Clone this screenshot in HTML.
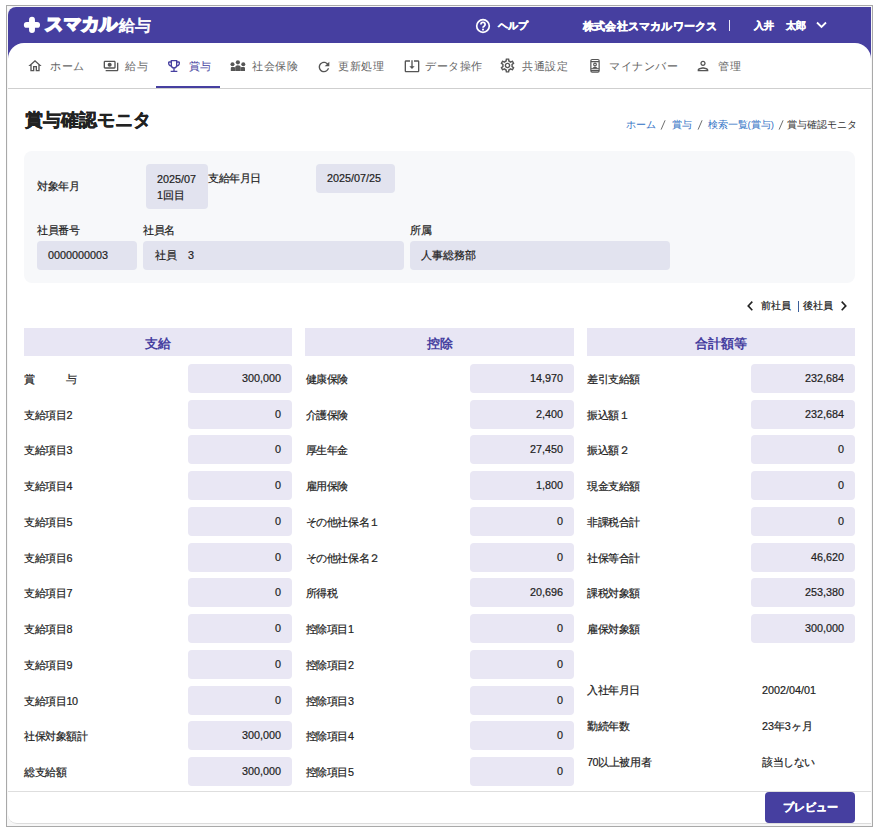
<!DOCTYPE html>
<html lang="ja">
<head>
<meta charset="utf-8">
<style>
*{box-sizing:border-box;margin:0;padding:0}
html,body{width:880px;height:833px;overflow:hidden;background:#fff}
body{font-family:"Liberation Sans",sans-serif;color:#222;position:relative}
.a{position:absolute;white-space:nowrap}
#frame{position:absolute;left:6px;top:5px;width:867px;height:822px;border:1px solid #a9a9a9;background:#f7f7f7}
#app{position:absolute;left:8px;top:7px;width:863px;height:817px;background:#fff;border-top-left-radius:8px;border-bottom-left-radius:9px;overflow:hidden;border-bottom:1px solid #dcdcdc}
#hdr{position:absolute;left:0;top:0;width:863px;height:60px;background:#463fa0}
#nav{position:absolute;left:0;top:36px;width:863px;height:60px;background:#fff;border-top-left-radius:16px;border-top-right-radius:16px}
#navline{position:absolute;left:0;top:81px;width:863px;height:1px;background:#cfcfcf}
.hw{color:#fff;font-weight:bold;font-size:11.2px;line-height:14px;-webkit-text-stroke:0.35px #fff}
.logo{font-size:18px;line-height:24px;font-weight:bold;color:#fff;transform:skewX(-4deg);-webkit-text-stroke:1.7px #fff;letter-spacing:0px}
.ni{color:#666;font-size:11.2px;line-height:14px;letter-spacing:0.5px}
.ic{position:absolute}

.ttl{left:25px;top:107.6px;font-size:17.6px;line-height:24px;font-weight:bold;color:#222;-webkit-text-stroke:0.4px #222}
.bc{font-size:9.6px;line-height:14px;color:#333}
.bc.lk{color:#2e6fc4}
.bc.sl{color:#555}
#panel{left:24px;top:150.8px;width:831px;height:131.9px;background:#f7f8fa;border-radius:8px}
.lb{font-size:10.8px;line-height:14px;color:#222;letter-spacing:-0.4px;-webkit-text-stroke:0.2px #222}
.box{background:#e2e3ef;border-radius:4px}
.vt{font-size:10.8px;line-height:14px;color:#222;-webkit-text-stroke:0.2px #222}
.pn{font-size:10.4px;line-height:14px;color:#222;-webkit-text-stroke:0.2px #222}
.sh{height:28px;background:#e8e6f4;color:#463fa0;font-weight:bold;font-size:12.8px;line-height:31px;text-align:center}
.inp{width:104px;height:29px;background:#e9e7f4;border-radius:4px;font-size:10.8px;line-height:29px;text-align:right;padding-right:11px;color:#222;-webkit-text-stroke:0.2px #222}
.btn{left:765px;top:792px;width:90px;height:31px;background:#463fa0;border-radius:4px;color:#fff;font-weight:bold;font-size:11.2px;line-height:31px;text-align:center;-webkit-text-stroke:0.3px #fff}
</style>
</head>
<body>
<div id="frame"></div>
<div id="app">
  <div id="hdr"></div>
  <div id="nav"></div>
  <div id="navline"></div>
</div>
<!-- header content (page coords) -->
<svg class="ic" style="left:20px;top:12px" width="24" height="26" viewBox="20 12 24 26"><path d="M32 19.8V30M26.8 24.9H37.1" stroke="#fff" stroke-width="5.9" stroke-linecap="round"/></svg>
<div class="a logo" style="left:44.8px;top:12.3px">スマカル</div>
<div class="a" style="left:119.3px;top:14.9px;font-size:16px;line-height:22px;color:#fff;-webkit-text-stroke:0.75px #fff">給与</div>
<svg class="ic" style="left:475px;top:18px" width="16" height="16" viewBox="0 0 16 16"><circle cx="8" cy="8" r="6.3" fill="none" stroke="#fff" stroke-width="1.7"/><path d="M5.9 6.4a2.1 2.1 0 1 1 3.2 1.8c-.8.5-1.1.8-1.1 1.6" fill="none" stroke="#fff" stroke-width="1.8"/><circle cx="8" cy="11.6" r="1.05" fill="#fff"/></svg>
<div class="a hw" style="left:497.5px;top:19px;font-size:10.4px">ヘルプ</div>
<div class="a hw" style="left:583px;top:18.5px;font-size:11.45px;letter-spacing:0.2px">株式会社スマカルワークス</div>
<div class="a" style="left:729px;top:20px;width:1px;height:11px;background:#eceaf8"></div>
<div class="a hw" style="left:754px;top:19px;font-size:10.4px">入井</div><div class="a hw" style="left:785.5px;top:19px;font-size:10.4px">太郎</div>
<svg class="ic" style="left:816px;top:21px" width="11" height="8" viewBox="0 0 11 8"><path d="M1 1.5l4.5 4.5 4.5-4.5" fill="none" stroke="#fff" stroke-width="1.8"/></svg>
<svg class="ic" style="left:228px;top:58px" width="20" height="16" viewBox="228 58 20 16"><g fill="#555"><circle cx="232.5" cy="64.3" r="2"/><circle cx="237.9" cy="62.3" r="2.1"/><circle cx="243.3" cy="64.3" r="2"/><path d="M230.8 71v-2.6c0-.8.6-1.3 1.4-1.3h1.8c.5 0 .9.2 1.1.5v3.4z"/><path d="M245 71v-2.6c0-.8-.6-1.3-1.4-1.3h-1.8c-.5 0-.9.2-1.1.5v3.4z"/><path d="M235.2 71v-3.6c0-1.3 1.2-2.1 2.7-2.1s2.8.8 2.8 2.1v3.6z"/></g></svg>
<!-- nav -->
<svg class="ic" style="left:27px;top:58px" width="16" height="16" viewBox="0 0 24 24"><path d="M12 5.69l5 4.5V18h-2v-6H9v6H7v-7.81l5-4.5M12 3L2 12h3v8h6v-6h2v6h6v-8h3L12 3z" fill="#555"/></svg>
<svg class="ic" style="left:102.5px;top:58px" width="16" height="16" viewBox="0 0 24 24"><path d="M19 14V6c0-1.1-.9-2-2-2H3c-1.1 0-2 .9-2 2v8c0 1.1.9 2 2 2h14c1.1 0 2-.9 2-2zm-2 0H3V6h14v8zm-7-7c-1.66 0-3 1.34-3 3s1.34 3 3 3 3-1.34 3-3-1.34-3-3-3zm13 0v11c0 1.1-.9 2-2 2H4v-2h17V7h2z" fill="#555"/></svg>
<svg class="ic" style="left:166px;top:58px" width="16" height="16" viewBox="0 0 24 24"><path d="M19 5h-2V3H7v2H5c-1.1 0-2 .9-2 2v1c0 2.550 1.92 4.63 4.39 4.94.63 1.5 1.98 2.63 3.61 2.96V19H7v2h10v-2h-4v-3.1c1.63-.33 2.98-1.46 3.61-2.96C19.08 12.63 21 10.55 21 8V7c0-1.1-.9-2-2-2zM5 8V7h2v3.82C5.84 10.4 5 9.3 5 8zm7 6c-1.65 0-3-1.35-3-3V5h6v6c0 1.65-1.35 3-3 3zm7-6c0 1.3-.84 2.4-2 2.82V7h2v1z" fill="#463fa0"/></svg>
<svg class="ic" style="left:316px;top:58.5px" width="16" height="16" viewBox="0 0 24 24"><path d="M17.65 6.35C16.2 4.9 14.21 4 12 4c-4.42 0-7.99 3.58-7.99 8s3.57 8 7.99 8c3.73 0 6.84-2.55 7.73-6h-2.08c-.82 2.33-3.04 4-5.65 4-3.31 0-6-2.69-6-6s2.69-6 6-6c1.66 0 3.14.69 4.22 1.78L13 11h7V4l-2.35 2.35z" fill="#555"/></svg>
<svg class="ic" style="left:403.5px;top:57.5px" width="16" height="16" viewBox="0 0 24 24"><path d="M12 16.5l4-4h-3v-9h-2v9H8l4 4zm9-13h-6v1.99h6v14.03H3V5.49h6V3.5H3c-1.1 0-2 .9-2 2v14c0 1.1.9 2 2 2h18c1.1 0 2-.9 2-2v-14c0-1.1-.9-2-2-2z" fill="#555"/></svg>
<svg class="ic" style="left:498.9px;top:57.1px" width="17" height="17" viewBox="0 0 24 24"><path d="M19.43 12.98c.04-.32.07-.64.07-.98 0-.34-.03-.66-.07-.98l2.11-1.65c.19-.15.24-.42.12-.64l-2-3.46c-.09-.16-.26-.25-.44-.25-.06 0-.12.01-.17.03l-2.49 1c-.52-.4-1.08-.73-1.690-.98l-.38-2.65C14.46 2.18 14.25 2 14 2h-4c-.25 0-.46.18-.49.42l-.38 2.65c-.61.25-1.17.59-1.69.98l-2.49-1c-.06-.02-.12-.03-.18-.03-.17 0-.34.09-.43.25l-2 3.46c-.13.22-.07.49.12.64l2.11 1.65c-.04.32-.07.65-.07.98 0 .33.03.66.07.98l-2.11 1.65c-.19.15-.24.42-.12.64l2 3.46c.09.16.26.25.44.25.06 0 .12-.01.17-.03l2.49-1c.52.4 1.08.73 1.69.98l.38 2.65c.03.24.24.42.49.42h4c.25 0 .46-.18.49-.42l.38-2.65c.61-.25 1.17-.59 1.69-.98l2.49 1c.06.02.12.03.18.03.17 0 .34-.09.43-.25l2-3.46c.12-.22.07-.49-.12-.64l-2.11-1.65zm-1.98-1.71c.04.31.05.52.05.73 0 .21-.02.43-.05.73l-.14 1.13.89.7 1.08.84-.7 1.21-1.27-.51-1.04-.42-.9.68c-.43.32-.84.56-1.25.73l-1.06.43-.16 1.13-.2 1.35h-1.4l-.19-1.35-.16-1.13-1.06-.43c-.43-.18-.83-.41-1.23-.71l-.91-.7-1.06.43-1.27.51-.7-1.21 1.08-.84.89-.7-.14-1.13c-.03-.31-.05-.54-.05-.74s.02-.43.05-.73l.14-1.13-.89-.7-1.08-.84.7-1.21 1.27.51 1.04.42.9-.68c.43-.32.84-.56 1.25-.73l1.06-.43.16-1.13.2-1.35h1.39l.19 1.35.16 1.13 1.06.43c.43.18.83.41 1.23.71l.91.7 1.06-.43 1.27-.51.7 1.21-1.07.85-.89.7.14 1.13zM12 8c-2.21 0-4 1.79-4 4s1.79 4 4 4 4-1.79 4-4-1.79-4-4-4zm0 6c-1.1 0-2-.9-2-2s.9-2 2-2 2 .9 2 2-.9 2-2 2z" fill="#555"/></svg>
<svg class="ic" style="left:588px;top:57px" width="14" height="18" viewBox="588 57 14 18"><g fill="none" stroke="#555" stroke-width="1.2"><rect x="590.85" y="59.5" width="8.3" height="12.65" rx="1.3"/><path d="M591 61.6h8M591 68.7h8M591 70.6h8" stroke-width="1.1"/><circle cx="595" cy="64.5" r="1.35" stroke-width="1.1"/></g><path d="M592.3 68.6c.5-1.2 1.5-1.8 2.7-1.8s2.2.6 2.7 1.8z" fill="#555"/></svg>
<svg class="ic" style="left:695px;top:58px" width="16" height="16" viewBox="0 0 24 24"><path d="M12 6c1.1 0 2 .9 2 2s-.9 2-2 2-2-.9-2-2 .9-2 2-2m0 10c2.7 0 5.8 1.29 6 2H6c.23-.72 3.31-2 6-2m0-12C9.79 4 8 5.79 8 8s1.79 4 4 4 4-1.79 4-4-1.79-4-4-4zm0 10c-2.670 0-8 1.34-8 4v2h16v-2c0-2.66-5.33-4-8-4z" fill="#555"/></svg>
<div class="a ni" style="left:50px;top:59px">ホーム</div>
<div class="a ni" style="left:125px;top:59px">給与</div>
<div class="a ni" style="left:188.8px;top:59px;color:#463fa0">賞与</div>
<div class="a ni" style="left:252.3px;top:59px">社会保険</div>
<div class="a ni" style="left:338.3px;top:59px">更新処理</div>
<div class="a ni" style="left:425.3px;top:59px">データ操作</div>
<div class="a ni" style="left:522px;top:59px">共通設定</div>
<div class="a ni" style="left:609.3px;top:59px">マイナンバー</div>
<div class="a ni" style="left:718px;top:59px">管理</div>
<div class="a" style="left:156px;top:86px;width:64px;height:2px;background:#463fa0"></div>

<div class="a ttl">賞与確認モニタ</div>
<div class="a bc lk" style="left:626.3px;top:117.6px">ホーム</div><svg class="ic" style="left:660px;top:119px" width="7" height="12" viewBox="0 0 7 12"><path d="M1.1 10.6L5.1 1.3" stroke="#666" stroke-width="0.95" fill="none"/></svg><div class="a bc lk" style="left:671.6px;top:117.6px">賞与</div><svg class="ic" style="left:696.5px;top:119px" width="7" height="12" viewBox="0 0 7 12"><path d="M1.1 10.6L5.1 1.3" stroke="#666" stroke-width="0.95" fill="none"/></svg><div class="a bc lk" style="left:707.6px;top:117.6px">検索一覧(賞与)</div><svg class="ic" style="left:777.5px;top:119px" width="7" height="12" viewBox="0 0 7 12"><path d="M1.1 10.6L5.1 1.3" stroke="#666" stroke-width="0.95" fill="none"/></svg><div class="a bc" style="left:787.4px;top:117.6px">賞与確認モニタ</div>
<div class="a" id="panel"></div>
<div class="a lb" style="left:37px;top:179px">対象年月</div>
<div class="a box" style="left:146px;top:164px;width:62px;height:45px"></div>
<div class="a vt" style="left:157px;top:171px;line-height:16px">2025/07<br>1回目</div>
<div class="a lb" style="left:208px;top:171px">支給年月日</div>
<div class="a box" style="left:316px;top:164px;width:79px;height:29px"></div>
<div class="a vt" style="left:327px;top:171px">2025/07/25</div>
<div class="a lb" style="left:37px;top:223.2px">社員番号</div>
<div class="a lb" style="left:143px;top:223.2px">社員名</div>
<div class="a lb" style="left:410px;top:223.2px">所属</div>
<div class="a box" style="left:37px;top:241px;width:100px;height:29px"></div>
<div class="a box" style="left:143px;top:241px;width:261px;height:29px"></div>
<div class="a box" style="left:410px;top:241px;width:260px;height:29px"></div>
<div class="a vt" style="left:48px;top:248px">0000000003</div>
<div class="a vt" style="left:155px;top:248px">社員　3</div>
<div class="a vt" style="left:421px;top:248px">人事総務部</div>
<svg class="ic" style="left:746px;top:300px" width="8" height="12" viewBox="0 0 8 12"><path d="M6.3 1.6L2.2 5.9l4.1 4.3" fill="none" stroke="#222" stroke-width="1.6"/></svg>
<div class="a pn" style="left:761px;top:299px">前社員</div>
<div class="a" style="left:798px;top:300.5px;width:1px;height:11.5px;background:#3a5f9a"></div>
<div class="a pn" style="left:803px;top:299px">後社員</div>
<svg class="ic" style="left:840px;top:300px" width="8" height="12" viewBox="0 0 8 12"><path d="M1.7 1.6l4.1 4.3-4.1 4.3" fill="none" stroke="#222" stroke-width="1.6"/></svg>
<div class="a sh" style="left:24px;top:328px;width:268px">支給</div>
<div class="a sh" style="left:305px;top:328px;width:269px">控除</div>
<div class="a sh" style="left:587px;top:328px;width:268px">合計額等</div>
<div class="a lb" style="left:24px;top:372.00px">賞<span style="position:absolute;left:41.6px">与</span></div>
<div class="a inp" style="left:188px;top:364.00px">300,000</div>
<div class="a lb" style="left:24px;top:407.73px">支給項目2</div>
<div class="a inp" style="left:188px;top:399.73px">0</div>
<div class="a lb" style="left:24px;top:443.46px">支給項目3</div>
<div class="a inp" style="left:188px;top:435.46px">0</div>
<div class="a lb" style="left:24px;top:479.19px">支給項目4</div>
<div class="a inp" style="left:188px;top:471.19px">0</div>
<div class="a lb" style="left:24px;top:514.92px">支給項目5</div>
<div class="a inp" style="left:188px;top:506.92px">0</div>
<div class="a lb" style="left:24px;top:550.65px">支給項目6</div>
<div class="a inp" style="left:188px;top:542.65px">0</div>
<div class="a lb" style="left:24px;top:586.38px">支給項目7</div>
<div class="a inp" style="left:188px;top:578.38px">0</div>
<div class="a lb" style="left:24px;top:622.11px">支給項目8</div>
<div class="a inp" style="left:188px;top:614.11px">0</div>
<div class="a lb" style="left:24px;top:657.84px">支給項目9</div>
<div class="a inp" style="left:188px;top:649.84px">0</div>
<div class="a lb" style="left:24px;top:693.57px">支給項目10</div>
<div class="a inp" style="left:188px;top:685.57px">0</div>
<div class="a lb" style="left:24px;top:729.30px">社保対象額計</div>
<div class="a inp" style="left:188px;top:721.30px">300,000</div>
<div class="a lb" style="left:24px;top:765.03px">総支給額</div>
<div class="a inp" style="left:188px;top:757.03px">300,000</div>
<div class="a lb" style="left:305.5px;top:372.00px">健康保険</div>
<div class="a inp" style="left:470px;top:364.00px">14,970</div>
<div class="a lb" style="left:305.5px;top:407.73px">介護保険</div>
<div class="a inp" style="left:470px;top:399.73px">2,400</div>
<div class="a lb" style="left:305.5px;top:443.46px">厚生年金</div>
<div class="a inp" style="left:470px;top:435.46px">27,450</div>
<div class="a lb" style="left:305.5px;top:479.19px">雇用保険</div>
<div class="a inp" style="left:470px;top:471.19px">1,800</div>
<div class="a lb" style="left:305.5px;top:514.92px">その他社保名１</div>
<div class="a inp" style="left:470px;top:506.92px">0</div>
<div class="a lb" style="left:305.5px;top:550.65px">その他社保名２</div>
<div class="a inp" style="left:470px;top:542.65px">0</div>
<div class="a lb" style="left:305.5px;top:586.38px">所得税</div>
<div class="a inp" style="left:470px;top:578.38px">20,696</div>
<div class="a lb" style="left:305.5px;top:622.11px">控除項目1</div>
<div class="a inp" style="left:470px;top:614.11px">0</div>
<div class="a lb" style="left:305.5px;top:657.84px">控除項目2</div>
<div class="a inp" style="left:470px;top:649.84px">0</div>
<div class="a lb" style="left:305.5px;top:693.57px">控除項目3</div>
<div class="a inp" style="left:470px;top:685.57px">0</div>
<div class="a lb" style="left:305.5px;top:729.30px">控除項目4</div>
<div class="a inp" style="left:470px;top:721.30px">0</div>
<div class="a lb" style="left:305.5px;top:765.03px">控除項目5</div>
<div class="a inp" style="left:470px;top:757.03px">0</div>
<div class="a lb" style="left:587px;top:372.00px">差引支給額</div>
<div class="a inp" style="left:751px;top:364.00px">232,684</div>
<div class="a lb" style="left:587px;top:407.73px">振込額１</div>
<div class="a inp" style="left:751px;top:399.73px">232,684</div>
<div class="a lb" style="left:587px;top:443.46px">振込額２</div>
<div class="a inp" style="left:751px;top:435.46px">0</div>
<div class="a lb" style="left:587px;top:479.19px">現金支給額</div>
<div class="a inp" style="left:751px;top:471.19px">0</div>
<div class="a lb" style="left:587px;top:514.92px">非課税合計</div>
<div class="a inp" style="left:751px;top:506.92px">0</div>
<div class="a lb" style="left:587px;top:550.65px">社保等合計</div>
<div class="a inp" style="left:751px;top:542.65px">46,620</div>
<div class="a lb" style="left:587px;top:586.38px">課税対象額</div>
<div class="a inp" style="left:751px;top:578.38px">253,380</div>
<div class="a lb" style="left:587px;top:622.11px">雇保対象額</div>
<div class="a inp" style="left:751px;top:614.11px">300,000</div>
<div class="a lb" style="left:587px;top:682.6px">入社年月日</div>
<div class="a lb" style="left:762px;top:682.6px;letter-spacing:0">2002/04/01</div>
<div class="a lb" style="left:587px;top:718.7px">勤続年数</div>
<div class="a lb" style="left:762px;top:718.7px;letter-spacing:-0.1px">23年3ヶ月</div>
<div class="a lb" style="left:587px;top:754.8px">70以上被用者</div>
<div class="a lb" style="left:762px;top:754.8px">該当しない</div>
<div class="a" style="left:8px;top:791px;width:863px;height:1px;background:#dedede"></div>
<div class="a btn">プレビュー</div>
</body>
</html>
